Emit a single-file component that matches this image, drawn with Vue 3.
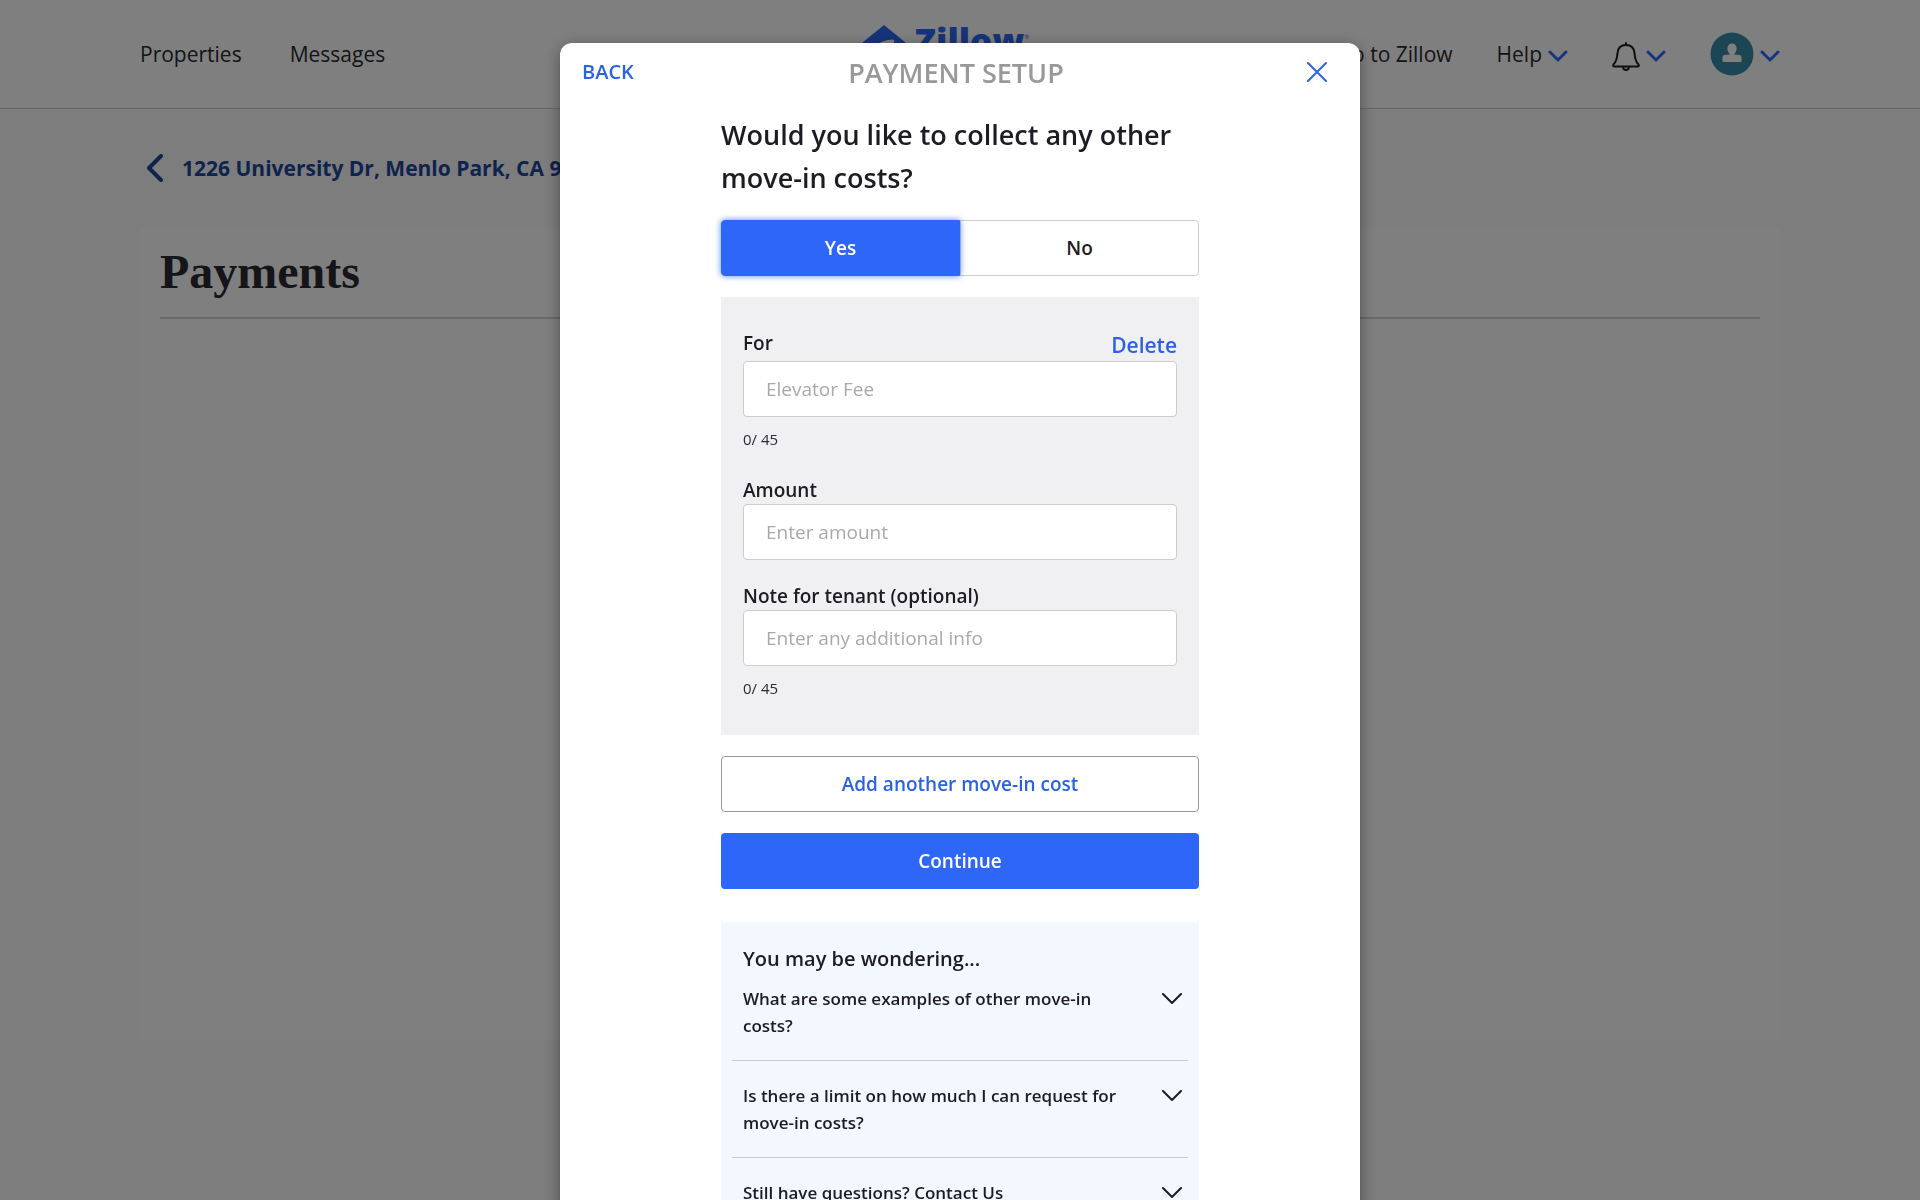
<script setup>
import { reactive, ref } from 'vue'

const collectOther = ref(true)
const limit = 45
const cost = reactive({ label: '', amount: '', note: '' })
const questions = [
  'What are some examples of other move-in costs?',
  'Is there a limit on how much I can request for move-in costs?',
  'Still have questions? Contact Us',
]
</script>

<template>
  <div class="page">
    <header class="topbar">
      <div class="topbar-inner">
        <nav class="nav nav-left">
          <a href="#">Properties</a>
          <a href="#">Messages</a>
        </nav>
        <a class="logo" href="#" aria-label="Zillow home">
          <svg class="house" viewBox="0 0 54 58" aria-hidden="true">
            <path d="M27 0 54 22v36H0V22z" fill="#2b68f5" />
            <path d="M14 23c7-5 14-8 21-8.500 2 0 3 1 2 3-7 6-13 13-17 21 8-4 17-7 25-8l-13 15c-9 1-19 3-30 8 4-10 9-19 16-27-2-2-2-3-4-3.500z" fill="#fff" />
          </svg>
          <span class="wordmark">Zillow</span><span class="reg">®</span>
        </a>
        <nav class="nav nav-right">
          <a href="#">Go to Zillow</a>
          <a class="menu" href="#">
            Help
            <svg class="caret" viewBox="0 0 20 12"><path d="m2 2 8 8 8-8" /></svg>
          </a>
          <a class="menu" href="#" aria-label="Notifications">
            <svg class="bell" viewBox="0 0 28 30">
              <path d="M14 2v2M14 4c-5 0-8 3-8.500 8-.4 6-1.500 9-4 11.500-.6.9-.3 2 .8 2h23.400c1.100 0 1.400-1.100.8-2-2.500-2.500-3.600-5.500-4-11.500C22 7 19 4 14 4zM11 26c.2 1.800 1.400 3 3 3s2.800-1.200 3-3" />
            </svg>
            <svg class="caret" viewBox="0 0 20 12"><path d="m2 2 8 8 8-8" /></svg>
          </a>
          <a class="menu" href="#" aria-label="Account">
            <svg class="avatar" viewBox="0 0 44 44">
              <circle cx="22" cy="22" r="21.500" fill="#3b8cab" />
              <path d="M22 11.500c2.800 0 4.600 2 4.600 5 0 2-.8 3.800-2 4.800v1.500h3.400c2.500 0 3.500 1.200 3.500 3.200V29c0 .6-.4 1-1 1h-17c-.6 0-1-.4-1-1v-3c0-2 1-3.200 3.500-3.200h3.400v-1.500c-1.200-1-2-2.800-2-4.800 0-3 1.800-5 4.600-5z" fill="#fff" />
            </svg>
            <svg class="caret" viewBox="0 0 20 12"><path d="m2 2 8 8 8-8" /></svg>
          </a>
        </nav>
      </div>
    </header>

    <main class="content">
      <a class="crumb" href="#">
        <svg viewBox="0 0 18 28"><path d="M15 2 3 14l12 12" /></svg>
        1226 University Dr, Menlo Park, CA 94025
      </a>
      <section class="card">
        <h1>Payments</h1>
      </section>
    </main>

    <div class="overlay">
      <div class="modal" role="dialog" aria-modal="true" aria-labelledby="setup-title">
        <div class="modal-head">
          <button class="back" type="button">BACK</button>
          <span id="setup-title" class="modal-title">PAYMENT SETUP</span>
          <button class="close" type="button" aria-label="Close">
            <svg viewBox="0 0 20 20"><path d="m1 1 18 18M19 1 1 19" /></svg>
          </button>
        </div>

        <div class="modal-body">
          <h2>Would you like to collect any other move-in costs?</h2>

          <div class="toggle">
            <button type="button" :class="{ on: collectOther }" :aria-pressed="collectOther" @click="collectOther = true">Yes</button>
            <button type="button" :class="{ on: !collectOther }" :aria-pressed="!collectOther" @click="collectOther = false">No</button>
          </div>

          <form class="cost" @submit.prevent>
            <div class="field">
              <div class="field-head">
                <label for="cost-for">For</label>
                <button class="delete" type="button">Delete</button>
              </div>
              <input id="cost-for" v-model="cost.label" type="text" placeholder="Elevator Fee" :maxlength="limit" />
              <p class="count">{{ cost.label.length }}/ {{ limit }}</p>
            </div>
            <div class="field">
              <label for="cost-amount">Amount</label>
              <input id="cost-amount" v-model="cost.amount" type="text" placeholder="Enter amount" />
            </div>
            <div class="field">
              <label for="cost-note">Note for tenant (optional)</label>
              <input id="cost-note" v-model="cost.note" type="text" placeholder="Enter any additional info" :maxlength="limit" />
              <p class="count">{{ cost.note.length }}/ {{ limit }}</p>
            </div>
          </form>

          <div class="actions">
            <button class="btn outline" type="button">Add another move-in cost</button>
            <button class="btn primary" type="button">Continue</button>
          </div>

          <section class="faq">
            <h3>You may be wondering...</h3>
            <ul>
              <li v-for="q in questions" :key="q">
                <button type="button" aria-expanded="false">
                  <span>{{ q }}</span>
                  <svg viewBox="0 0 20 12"><path d="m1 1 9 9 9-9" /></svg>
                </button>
              </li>
            </ul>
          </section>
        </div>
      </div>
    </div>
  </div>
</template>

<style>
body {
  background: #fafafa;
}
</style>

<style scoped>
.page {
  min-height: 100vh;
  background: #fafafa;
  color: #2a2a33;
  font-family: "Open Sans", sans-serif;
}
.page * {
  box-sizing: border-box;
}
a {
  color: inherit;
  text-decoration: none;
}
button {
  padding: 0;
  border: 0;
  background: none;
  color: inherit;
  font: inherit;
  cursor: pointer;
}
svg {
  display: block;
  flex: none;
  fill: none;
  stroke-linecap: round;
  stroke-linejoin: round;
}

.topbar {
  background: #fff;
  border-bottom: 1px solid #cfcfcf;
}
.topbar-inner {
  display: grid;
  grid-template-columns: 1fr auto 1fr;
  align-items: center;
  max-width: 1640px;
  height: 108px;
  margin: 0 auto;
}
.nav {
  display: flex;
  align-items: center;
  font-size: 21px;
  line-height: 32px;
}
.nav-left {
  gap: 48px;
}
.nav-right {
  justify-content: flex-end;
  gap: 44px;
}
.menu {
  display: flex;
  align-items: center;
  gap: 6px;
}
.caret {
  width: 20px;
  height: 12px;
  margin-top: 4px;
  stroke: #2f6bff;
  stroke-width: 3;
}
.bell {
  width: 28px;
  height: 30px;
  margin-top: 4px;
  stroke: #1c1c22;
  stroke-width: 2;
}
.avatar {
  width: 44px;
  height: 44px;
}
.logo {
  display: flex;
  align-items: flex-start;
  margin-right: 34px;
  color: #2b68f5;
}
.house {
  width: 54px;
  height: 58px;
}
.wordmark {
  margin-left: 4px;
  font-size: 35px;
  font-weight: 800;
  line-height: 32px;
}
.reg {
  font-size: 6px;
  line-height: 24px;
}

.content {
  max-width: 1640px;
  margin: 0 auto;
}
.crumb {
  display: flex;
  align-items: center;
  gap: 18px;
  padding: 43px 0 44px 6px;
  color: #1c469c;
  font-size: 21px;
  font-weight: 700;
  line-height: 32px;
}
.crumb svg {
  width: 18px;
  height: 28px;
  stroke: #1c469c;
  stroke-width: 4;
}
.card {
  min-height: 812px;
  padding: 16px 20px;
  background: #fff;
}
h1 {
  margin: 0;
  padding-bottom: 17px;
  border-bottom: 2px solid #d6d6d6;
  font-family: "Liberation Serif", serif;
  font-size: 48px;
  font-weight: 700;
  line-height: 56px;
}

.overlay {
  position: fixed;
  inset: 0;
  padding-top: 43px;
  overflow-y: auto;
  scrollbar-width: none;
  background: rgba(0, 0, 0, 0.5);
}
.modal {
  max-width: 800px;
  margin: 0 auto;
  padding-bottom: 40px;
  border-radius: 12px;
  background: #fff;
  box-shadow: 0 4px 16px rgba(0, 0, 0, 0.4);
}
.modal-head {
  display: flex;
  align-items: center;
  justify-content: space-between;
  height: 58px;
  padding: 0 22px;
}
.back {
  color: #2b62e3;
  font-size: 20px;
  font-weight: 600;
  line-height: 32px;
}
.modal-title {
  color: #999;
  font-size: 27px;
  font-weight: 600;
  line-height: 43px;
}
.close {
  display: flex;
  justify-content: flex-end;
  width: 60px;
  padding: 6px 11px;
}
.close svg {
  width: 20px;
  height: 20px;
  stroke: #2b62e3;
  stroke-width: 2;
}
.modal-body {
  max-width: 478px;
  margin: 12px auto 0;
}
h2 {
  margin: 0 0 21px;
  color: #1c1c22;
  font-size: 27px;
  font-weight: 600;
  line-height: 43px;
}
.toggle {
  display: flex;
}
.toggle button {
  position: relative;
  flex: 1;
  height: 56px;
  border: 1px solid #ccc;
  background: #fff;
  color: #1c1c22;
  font-size: 19px;
  font-weight: 600;
}
.toggle button:first-child {
  border-radius: 4px 0 0 4px;
}
.toggle button:last-child {
  border-radius: 0 4px 4px 0;
}
.toggle button.on {
  z-index: 1;
  border-color: #2e67f8;
  background: #2e67f8;
  box-shadow: 0 0 6px rgba(46, 103, 248, 0.8);
  color: #fff;
}
.cost {
  display: flex;
  flex-direction: column;
  gap: 22px;
  margin-top: 21px;
  padding: 32px 22px;
  background: #f0f0f3;
}
.field-head {
  display: flex;
  align-items: flex-start;
  justify-content: space-between;
}
label {
  display: block;
  color: #1c1c22;
  font-size: 19px;
  font-weight: 600;
  line-height: 28px;
}
.delete {
  color: #2b62e3;
  font-size: 21px;
  font-weight: 600;
  line-height: 32px;
}
input {
  display: block;
  width: 100%;
  height: 56px;
  padding: 0 22px;
  border: 1px solid #ccc;
  border-radius: 4px;
  background: #fff;
  color: #1c1c22;
  font: inherit;
  font-size: 19px;
}
input::placeholder {
  color: #a9a9a9;
  opacity: 1;
}
.count {
  margin: 11px 0 4px;
  font-size: 15px;
  line-height: 22px;
}
.actions {
  display: flex;
  flex-direction: column;
  gap: 21px;
  margin: 21px 0 33px;
}
.btn {
  height: 56px;
  border-radius: 4px;
  font-size: 19px;
  font-weight: 600;
}
.outline {
  border: 1px solid #999;
  background: #fff;
  color: #2b62e3;
}
.primary {
  background: #2e67f8;
  color: #fff;
}
.faq {
  padding: 21px 11px;
  background: #f3f8fe;
  color: #1c1c22;
}
h3 {
  margin: 0 11px 10px;
  font-size: 20px;
  font-weight: 600;
  line-height: 32px;
}
ul {
  margin: 0;
  padding: 0;
  list-style: none;
}
li {
  padding: 21px 6px 21px 11px;
  border-bottom: 1px solid #ccc;
}
li:first-child {
  padding-top: 0;
}
li:last-child {
  border-bottom: 0;
}
li button {
  display: flex;
  align-items: flex-start;
  justify-content: space-between;
  gap: 36px;
  width: 100%;
  font-size: 17px;
  font-weight: 600;
  line-height: 27px;
  text-align: left;
}
li svg {
  width: 20px;
  height: 12px;
  margin-top: 8px;
  stroke: #1c1c22;
  stroke-width: 2;
}
</style>
